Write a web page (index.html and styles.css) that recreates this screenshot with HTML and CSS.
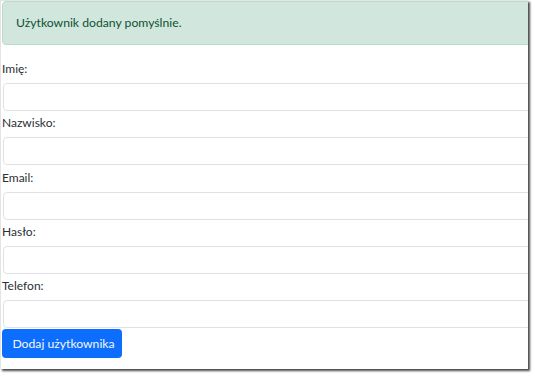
FILE: index.html
```html
<!DOCTYPE html>
<html lang="pl">
<head>
    <meta charset="UTF-8">
    <title>Dodaj użytkownika</title>
    <link rel="stylesheet" href="styles.css">
</head>
<body>

    <div class="okno">
        <div class="alert-sukces">Użytkownik dodany pomyślnie.</div>

        <form class="formularz">
            <label for="imie">Imię:</label>
            <input type="text" id="imie">

            <label for="nazwisko">Nazwisko:</label>
            <input type="text" id="nazwisko">

            <label for="email">Email:</label>
            <input type="email" id="email">

            <label for="haslo">Hasło:</label>
            <input type="password" id="haslo">

            <label for="telefon">Telefon:</label>
            <input type="text" id="telefon">

            <button type="submit" class="przycisk">Dodaj użytkownika</button>
        </form>
    </div>

</body>
</html>
```

FILE: styles.css
```css
html, body { height: 100%; }
body { margin: 0; min-height: 379px; background-color: #fff; font-family: "Lato", "Liberation Sans", sans-serif; color: #2b2f33; }
.okno { width: 527px; height: 368px; border-top: 1px solid #e4e4e4; border-left: 1px solid #e4e4e4; box-shadow: 2px 2px 2px #4a4a4a; overflow: hidden; background-color: #fff; }
.alert-sukces { width: 560px; margin: 0 0 15px 1px; padding: 12px 13px; font-size: 12.2px; line-height: 18px; color: #0f5132; background-color: #d1e7dd; border: 1px solid #badbcc; border-radius: 4px; }
.formularz { margin-left: 1px; }
.formularz label { display: block; font-size: 12px; line-height: 18px; margin-bottom: 5px; }
.formularz input { display: block; box-sizing: border-box; width: 560px; height: 28px; margin: 0 0 3.3px 1px; border: 1px solid #dee2e6; border-radius: 4px; }
.formularz input:last-of-type { margin-bottom: 1px; }
.przycisk { display: block; width: 120px; height: 29px; padding: 0 0 0 3px; font-family: inherit; font-size: 12.2px; color: #f2f6ff; background-color: #0d6efd; border: none; border-radius: 4px; cursor: pointer; }
```
